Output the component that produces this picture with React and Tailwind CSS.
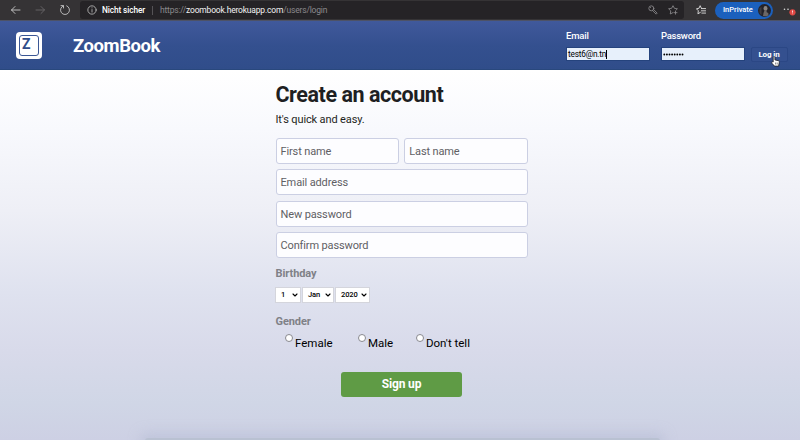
import React from "react";

function Icon({ className, children, sw = 1 }) {
  return (
    <svg className={className} viewBox="0 0 12 12" fill="none" stroke="currentColor" strokeWidth={sw} strokeLinecap="round" strokeLinejoin="round">
      {children}
    </svg>
  );
}

function BrowserBar() {
  return (
    <div className="flex h-[21px] shrink-0 items-center border-b border-[#4d5266] bg-[#353335] text-[9px] text-white">
      <Icon className="ml-[10px] h-[12px] w-[12px] text-[#c9c9c9]" sw={0.9}>
        <path d="M10 6H1.500M5 2.500 1.500 6 5 9.500" />
      </Icon>
      <Icon className="ml-[12px] h-[12px] w-[12px] text-[#69676a]" sw={0.9}>
        <path d="M2 6h8.500M7 2.500 10.500 6 7 9.500" />
      </Icon>
      <Icon className="ml-[13px] h-[12px] w-[12px] text-[#c4c4c4]" sw={0.9}>
        <path d="M4.300 1.800A4.500 4.500 0 1 0 7.700 1.800M2 1.600h2.500V4" />
      </Icon>
      <div className="ml-[9px] flex h-[18px] w-[604px] items-center rounded-[3px] bg-[#252326] pl-[7px]">
        <Icon className="h-[10px] w-[10px] text-[#bdbdbd]" sw={1}>
          <circle cx="6" cy="6" r="5" />
          <path d="M6 5.500v3M6 3.400v.1" />
        </Icon>
        <span className="ml-[5px] w-[44px] whitespace-nowrap text-[8.300px] font-medium tracking-[-0.120px]">Nicht sicher</span>
        <span className="ml-[6px] h-[9px] w-px bg-[#555356]" />
        <span className="ml-[7px] whitespace-nowrap text-[8.500px] tracking-[-0.190px] text-[#8b898c]">
          https://<span className="text-[#f2f2f2]">zoombook.herokuapp.com</span>/users/login
        </span>
        <Icon className="mr-[10px] ml-auto h-[10px] w-[10px] text-[#8d8b8e]">
          <circle cx="4" cy="4" r="3" />
          <path d="m5.500 6.800 4.300 4.200 1.200-1.200-4.200-4.300M3 3h.1" />
        </Icon>
        <Icon className="mr-[6px] h-[10px] w-[10px] text-[#8d8b8e]">
          <path d="M9.500 6.300 11.300 4.500 7.700 4 6 .8 4.300 4 .7 4.500l2.600 2.600-.6 3.700L6 9.100M9 7.500v3.500M7.300 9.200h3.500" />
        </Icon>
      </div>
      <Icon className="ml-[12px] h-[10px] w-[10px] text-[#dddddd]" sw={1.100}>
        <path d="M6.500 4 5 .8 3.500 4 .5 4.500l2.300 2.400-.5 3.600 2.900-1.600M6.500 4.300h5M6.500 7h5M7 9.700h4.500" />
      </Icon>
      <div className="ml-[9px] flex h-[17px] w-[58px] items-center rounded-full bg-[#1b60bd] pl-[8px]">
        <span className="w-[31px] whitespace-nowrap text-[7.500px] font-medium">InPrivate</span>
        <svg className="ml-[4px] h-[13px] w-[13px]" viewBox="0 0 13 13">
          <circle cx="6.500" cy="6.500" r="6.500" fill="#242329" />
          <ellipse cx="7.500" cy="4.400" rx="2" ry="2.400" fill="#8b8581" />
          <path d="M6.500 6.500h2l.2 1.700 1.600.8.200 2.200a6 6 0 0 1-5.500.8l.5-3z" fill="#6b6766" />
          <path d="M1.500 4v5l2 2V3z" fill="#3f3c40" />
        </svg>
      </div>
      <svg className="ml-[10px] h-[12px] w-[14px]" viewBox="0 0 14 12">
        <circle cx="1.500" cy="5.300" r=".8" fill="#ddd" />
        <circle cx="5" cy="5.300" r=".8" fill="#ddd" />
        <circle cx="9.500" cy="8.300" r="3.100" fill="#df4844" />
        <path d="M9.500 6.500v2.100M9.500 9.600v.5" stroke="#fff" strokeWidth=".8" />
      </svg>
    </div>
  );
}

function Header() {
  return (
    <header className="flex h-[49px] shrink-0 border-b border-[#29487d] bg-linear-to-b from-[#40599b] via-[#34508f] to-[#304d8a] text-white">
      <div className="mt-[11px] ml-[16px] h-[27px] w-[26px] rounded-[4px] bg-white p-[3px]">
        <div className="h-[21px] w-[20px] rounded-[3px] border border-[#3b5795] pl-[2px] text-[14px] leading-[16px] font-bold text-[#304d8a]">Z</div>
      </div>
      <h1 className="mt-[12px] ml-[31px] w-[100px] text-[18.500px] leading-[26px] font-bold tracking-[-0.450px]">ZoomBook</h1>
      <form className="ml-auto flex pr-[12.500px]" onSubmit={(e) => e.preventDefault()}>
        <div className="w-[95px]">
          <div className="mt-[8px] h-[13px] text-[9.500px] leading-[14px] font-medium tracking-[-0.200px]">Email</div>
          <div className="mt-[5px] flex h-[14px] w-[84px] items-center border border-[#25437d] bg-[#e7f0fb] pl-[1px] text-[8.300px] tracking-[-0.220px] text-black">
            test6@n.tn<span className="h-[9px] w-px bg-black" />
          </div>
        </div>
        <div className="w-[89.500px]">
          <div className="mt-[8px] h-[13px] text-[9.500px] leading-[14px] font-medium tracking-[-0.260px]">Password</div>
          <div className="mt-[5px] flex h-[14px] w-[84px] items-center border border-[#25437d] bg-[#e7f0fb] pl-[1px]">
            <svg className="h-[3px] w-[22px] text-black" viewBox="0 0 22 3">
              {[0, 1, 2, 3, 4, 5, 6, 7].map((i) => (
                <circle key={i} cx={1.3 + i * 2.6} cy="1.500" r="0.950" fill="currentColor" />
              ))}
            </svg>
          </div>
        </div>
        <button className="relative mt-[26px] h-[15px] w-[37px] rounded-[2px] border border-[#2b4785] bg-[#34508f] text-[8px] leading-[13px] font-bold tracking-[-0.150px]">
          Log in
          <svg className="absolute top-[8px] left-[19px] h-[11px] w-[9px]" viewBox="0 0 9 11">
            <path d="M2.200 6V1.500c0-1.300 1.700-1.300 1.700 0v2.400l3.500.8c.8.200 1 .8.900 1.400l-.7 4H3.500L.9 7.200C.3 6.200 1.300 5.300 2.200 6z" fill="#fff" stroke="#222" strokeWidth=".8" />
            <path d="M4.600 6.500v2M6.200 6.500v2" stroke="#333" strokeWidth=".6" />
          </svg>
        </button>
      </form>
    </header>
  );
}

function Field({ children }) {
  return <div className="h-[26px] flex-1 rounded-[3px] border border-[#cbcfe3] bg-[#fdfdff] pl-[4px] text-[11px] leading-[25px] tracking-[-0.130px] text-[#5f6064]">{children}</div>;
}

function Select({ className, children }) {
  return (
    <div className={"flex h-[16px] items-center border border-[#d4d5dc] bg-white pl-[5px] text-[7.500px] font-medium tracking-[-0.100px] text-black " + className}>
      {children}
      <Icon className="mr-[2px] ml-auto h-[6px] w-[6px]" sw={2.200}>
        <path d="m2 4 4 4 4-4" />
      </Icon>
    </div>
  );
}

function Radio({ className, children }) {
  return (
    <label className={"flex text-[11.500px] leading-[16px] text-black " + className}>
      <span className="mt-px mr-[2px] h-[8px] w-[8px] shrink-0 rounded-full border border-[#89898f] bg-white" />
      <span className="mt-[2px] whitespace-nowrap">{children}</span>
    </label>
  );
}

export default function App() {
  return (
    <div className="relative flex h-[440px] w-[800px] flex-col overflow-hidden bg-white font-['Roboto','Liberation_Sans',sans-serif]">
      <BrowserBar />
      <Header />
      <main className="flex-1 bg-[linear-gradient(180deg,#ffffff_0%,#f8f9fd_16%,#eeeff6_38%,#dfe2ef_60%,#d8daea_76%,#d0d6e6_90%,#cdd0e4_100%)] pl-[275.500px]">
        <div className="w-[252.500px] pt-[12px]">
          <h2 className="text-[21.500px] leading-[26px] font-bold tracking-[-0.450px] whitespace-nowrap text-[#1e1f22]">Create an account</h2>
          <p className="mt-[5px] text-[11px] leading-[14px] tracking-[-0.130px] text-[#1e1f22]">It's quick and easy.</p>
          <div className="mt-[11px] flex flex-col gap-[5.300px]">
            <div className="flex gap-[5px]">
              <Field>First name</Field>
              <Field>Last name</Field>
            </div>
            <div className="flex"><Field>Email address</Field></div>
            <div className="flex"><Field>New password</Field></div>
            <div className="flex"><Field>Confirm password</Field></div>
          </div>
          <h3 className="mt-[9px] text-[11px] leading-[14px] font-bold tracking-[-0.080px] text-[#7f8187]">Birthday</h3>
          <div className="mt-[6px] -ml-[0.500px] flex gap-[1px]">
            <Select className="w-[26px]">1</Select>
            <Select className="w-[32px]">Jan</Select>
            <Select className="w-[35px]">2020</Select>
          </div>
          <h3 className="mt-[12px] text-[11px] leading-[14px] font-bold tracking-[-0.080px] text-[#7f8187]">Gender</h3>
          <div className="mt-[4px] flex pl-[9.500px]">
            <Radio className="w-[73px]">Female</Radio>
            <Radio className="w-[58px]">Male</Radio>
            <Radio className="w-[70px]">Don't tell</Radio>
          </div>
          <button className="mt-[21px] ml-[65.500px] block h-[25px] w-[121px] rounded-[3px] bg-[#5f9b45] text-[12px] font-bold tracking-[-0.150px] text-white">Sign up</button>
        </div>
      </main>
      <div className="absolute top-[438px] left-[145px] h-[6px] w-[515px] rounded-[8px] bg-[#b9c1d2] shadow-[0_0_12px_5px_rgba(180,188,211,0.55)]" />
    </div>
  );
}
